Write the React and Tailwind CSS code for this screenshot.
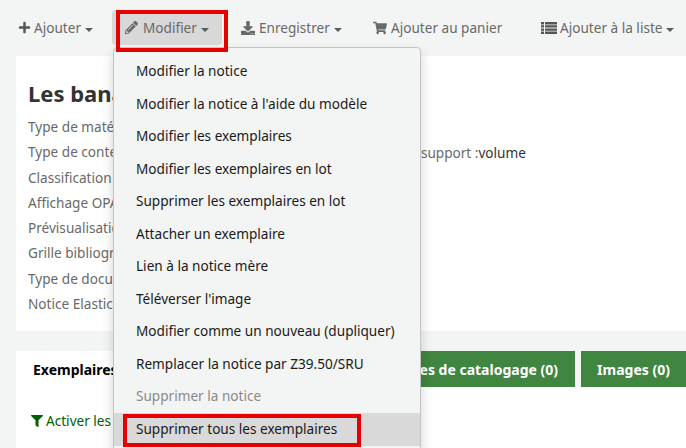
import { FaPlus, FaPencilAlt, FaDownload, FaShoppingCart, FaFilter } from "react-icons/fa";

const font = "font-['Noto_Sans','Open_Sans',sans-serif]";

const details = [
  "Type de matériel",
  "Type de contenu",
  "Classification",
  "Affichage OPAC",
  "Prévisualisation",
  "Grille bibliographique",
  "Type de document",
  "Notice Elastic",
];

const menuItems = [
  "Modifier la notice",
  "Modifier la notice à l'aide du modèle",
  "Modifier les exemplaires",
  "Modifier les exemplaires en lot",
  "Supprimer les exemplaires en lot",
  "Attacher un exemplaire",
  "Lien à la notice mère",
  "Téléverser l'image",
  "Modifier comme un nouveau (dupliquer)",
  "Remplacer la notice par Z39.50/SRU",
];

function ListIcon() {
  return (
    <svg width="16" height="12" viewBox="0 0 16 12" fill="#555" className="-translate-y-[1px]">
      <path d="M0 0h3v2.4H0zM4 0h12v2.4H4zM0 3.2h3v2.4H0zM4 3.2h12v2.4H4zM0 6.4h3v2.4H0zM4 6.4h12v2.4H4zM0 9.6h3V12H0zM4 9.6h12V12H4z" />
    </svg>
  );
}

function Caret() {
  return <span className="ml-[4px] inline-block border-x-[4px] border-t-[4px] border-x-transparent border-t-[#5c5c5c] translate-y-[1px]" />;
}

function ToolButton({ icon, label, caret, className, gap = "ml-[4px]" }) {
  return (
    <div className={`flex items-center h-[35px] pt-[2px] text-[13.6px] text-[#696969] whitespace-nowrap ${className}`}>
      {icon}
      <span className={gap}>{label}</span>
      {caret && <Caret />}
    </div>
  );
}

export default function App() {
  return (
    <div className={`relative h-[448px] w-[686px] overflow-hidden bg-[#f3f4f4] ${font}`}>
      {/* Toolbar */}
      <div className="flex h-[56px] items-start pt-[10px]">
        <ToolButton className="ml-[18px] w-[94px]" gap="ml-[3px]" icon={<FaPlus className="text-[#555] text-[13px] -translate-y-[1px]" />} label="Ajouter" caret />
        <ToolButton className="w-[110px] pl-[13px] rounded-[4px] bg-[#d8d8d8]" gap="ml-[5px]" icon={<FaPencilAlt className="text-[#696969] text-[13px] -translate-y-[1px]" />} label="Modifier" caret />
        <ToolButton className="ml-[19px] w-[132px]" icon={<FaDownload className="text-[#696969] text-[14px] -translate-y-[1px]" />} label="Enregistrer" caret />
        <ToolButton className="w-[168px]" icon={<FaShoppingCart className="text-[#696969] text-[14px] -translate-y-[1px]" />} label="Ajouter au panier" />
        <ToolButton gap="ml-[3px]" icon={<ListIcon />} label="Ajouter à la liste" caret />
      </div>

      {/* Record details */}
      <div className="ml-[16px] h-[275px] bg-white pl-[12px] pt-[22px]">
        <h1 className="text-[22px] font-bold leading-[30px] text-[#333]">Les bananes</h1>
        <div className="mt-[6px] flex flex-col text-[13.6px] leading-[25.3px] text-[#696969]">
          {details.map((label, i) => (
            <div key={label} className="flex whitespace-nowrap">
              <span>{label}</span>
              {i === 1 && (
                <span className="ml-[287px] translate-y-[1px]">
                  support :<span className="text-[#333]">volume</span>
                </span>
              )}
            </div>
          ))}
        </div>
      </div>

      {/* Tabs */}
      <div className="ml-[16px] mt-[20px] h-[97px] bg-white">
        <div className="flex h-[36px] bg-[#f3f4f4] text-[14px] font-bold">
          <div className="flex w-[240px] items-center bg-white pl-[17px] text-black">Exemplaires (0)</div>
          <div className="flex w-[319px] items-center justify-end bg-[#408540] pr-[17px] text-white whitespace-nowrap">Notices de catalogage (0)</div>
          <div className="ml-[6px] flex w-[105px] items-center justify-center bg-[#408540] text-white">Images (0)</div>
        </div>
        <div className="flex items-center pl-[15px] pt-[24px] text-[13.6px] leading-[20px] text-[#006100]">
          <FaFilter className="mr-[3px] text-[12px]" />
          Activer les filtres
        </div>
      </div>

      {/* Open dropdown menu */}
      <div className="absolute left-[113px] top-[47px] h-[420px] w-[308px] rounded-[4px] border border-[#c4c4c4] bg-[#f3f4f4] py-[7px] text-[13.6px] text-[#1a1a1a] shadow-[0_6px_12px_rgba(0,0,0,0.18)]">
        {menuItems.map((item) => (
          <div key={item} className="flex h-[32.5px] items-center pl-[22px] whitespace-nowrap">{item}</div>
        ))}
        <div className="flex h-[32.5px] items-center pl-[22px] text-[#8a8a8a]">Supprimer la notice</div>
        <div className="flex h-[33px] items-center bg-[#d9d9d9] pl-[22px]">Supprimer tous les exemplaires</div>
      </div>

      {/* Red annotation boxes */}
      <div className="absolute left-[116px] top-[10px] h-[42px] w-[112px] border-[4px] border-[#e60000]" />
      <div className="absolute left-[123px] top-[414px] h-[33px] w-[238px] border-[4px] border-[#e60000]" />
    </div>
  );
}
